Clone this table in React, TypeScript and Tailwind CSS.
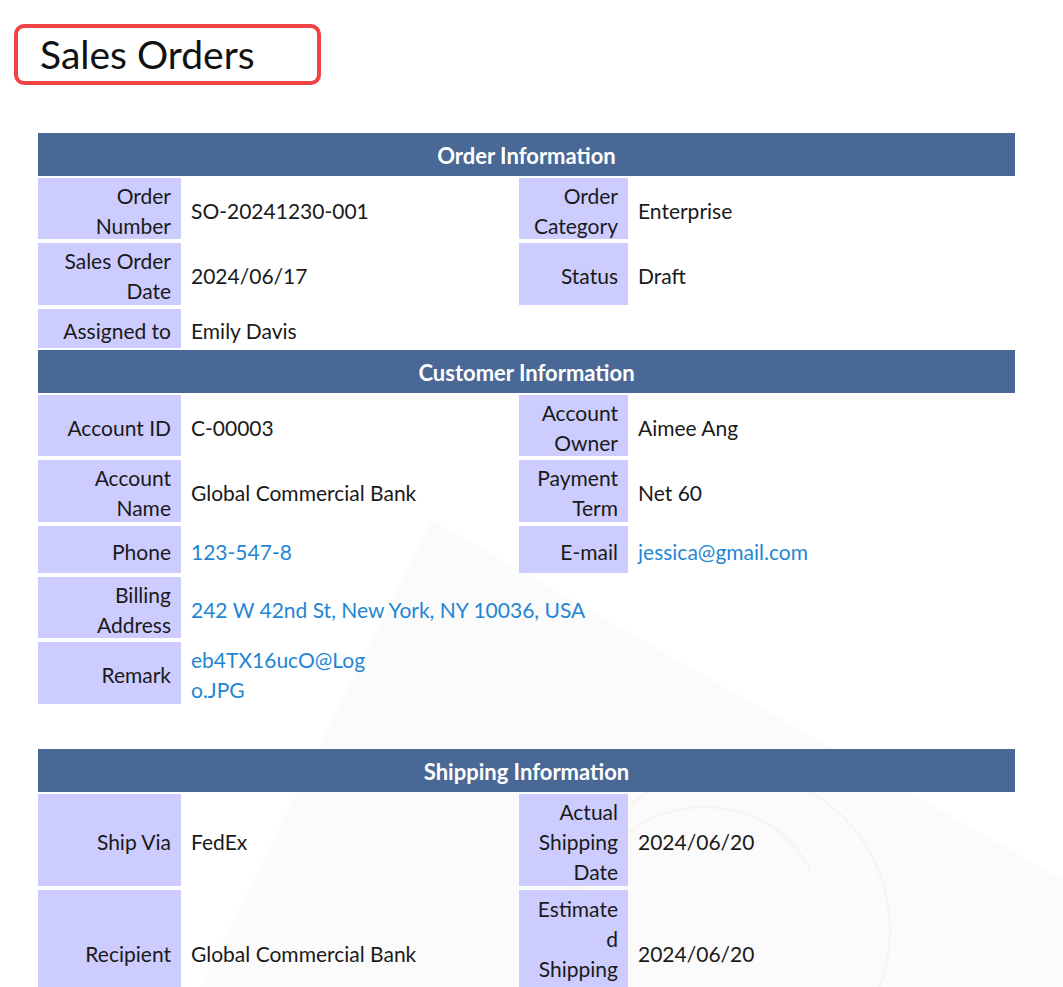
type Field = {
  label?: React.ReactNode;
  value?: React.ReactNode;
  link?: boolean;
};

type RowProps = {
  h: string;
  left: Field;
  right?: Field;
  wide?: boolean;
};

const Label = ({ children }: { children?: React.ReactNode }) => (
  <div className="h-full bg-[#ccccff] flex items-center justify-end text-right pr-[10px] leading-[30px]">
    <div className="translate-y-[2px]">{children}</div>
  </div>
);

const Value = ({ children, link, wide }: { children?: React.ReactNode; link?: boolean; wide?: boolean }) => (
  <div
    className={`h-full flex items-center pl-[10px] leading-[30px] ${link ? 'text-[#1f86d4]' : 'text-[#1a1a1a]'} ${wide ? 'col-span-3' : ''}`}
  >
    <div className="translate-y-[2px]">{children}</div>
  </div>
);

const Row = ({ h, left, right, wide }: RowProps) => (
  <div className={`grid grid-cols-[143px_338px_109px_1fr] py-[2px] ${h}`}>
    <Label>{left.label}</Label>
    <Value link={left.link} wide={wide}>
      {left.value}
    </Value>
    {!wide && right && <Label>{right.label}</Label>}
    {!wide && right && <Value link={right.link}>{right.value}</Value>}
  </div>
);

const SectionHeader = ({ title }: { title: string }) => (
  <div className="h-[43px] bg-[#4a6896] text-white font-bold text-[22px] flex items-center justify-center">
    <span className="translate-y-[1px]">{title}</span>
  </div>
);

// faint watermark behind the page
const Watermark = () => (
  <svg className="absolute inset-0 pointer-events-none" width="1063" height="987" viewBox="0 0 1063 987">
    <polygon points="432,520 1063,880 1063,987 200,987" fill="#fbfbfb" />
    <circle cx="730" cy="930" r="160" fill="none" stroke="#f6f4f0" strokeWidth="2" />
    <path d="M610 850 C 660 790, 770 790, 810 870" fill="none" stroke="#f6f4f0" strokeWidth="2" />
  </svg>
);

export default function App() {
  return (
    <div className="relative w-[1063px] h-[987px] overflow-hidden bg-white font-['Lato',sans-serif] text-[21px] text-[#1a1a1a]">
      <Watermark />
      <div className="relative">
        <div className="ml-[14px] mt-[24px] w-[307px] h-[61px] border-4 border-[#f04444] rounded-[10px] flex items-center pl-[22px]">
          <span className="text-[39px] leading-none text-[#111]">Sales Orders</span>
        </div>

        <div className="ml-[38px] w-[977px] mt-[48px]">
          <SectionHeader title="Order Information" />
          <Row
            h="h-[65px]"
            left={{ label: <>Order<br />Number</>, value: 'SO-20241230-001' }}
            right={{ label: <>Order<br />Category</>, value: 'Enterprise' }}
          />
          <Row
            h="h-[66px]"
            left={{ label: <>Sales Order<br />Date</>, value: '2024/06/17' }}
            right={{ label: 'Status', value: 'Draft' }}
          />
          <Row h="h-[43px]" left={{ label: 'Assigned to', value: 'Emily Davis' }} />

          <SectionHeader title="Customer Information" />
          <Row
            h="h-[65px]"
            left={{ label: 'Account ID', value: 'C-00003' }}
            right={{ label: <>Account<br />Owner</>, value: 'Aimee Ang' }}
          />
          <Row
            h="h-[66px]"
            left={{ label: <>Account<br />Name</>, value: 'Global Commercial Bank' }}
            right={{ label: <>Payment<br />Term</>, value: 'Net 60' }}
          />
          <Row
            h="h-[51px]"
            left={{ label: 'Phone', value: '123-547-8', link: true }}
            right={{ label: 'E-mail', value: 'jessica@gmail.com', link: true }}
          />
          <Row
            h="h-[65px]"
            wide
            left={{ label: <>Billing<br />Address</>, value: '242 W 42nd St, New York, NY 10036, USA', link: true }}
          />
          <Row
            h="h-[66px]"
            left={{ label: 'Remark', value: <>eb4TX16ucO@Log<br />o.JPG</>, link: true }}
          />

          <div className="mt-[43px]">
            <SectionHeader title="Shipping Information" />
            <Row
              h="h-[96px]"
              left={{ label: 'Ship Via', value: 'FedEx' }}
              right={{ label: <>Actual<br />Shipping<br />Date</>, value: '2024/06/20' }}
            />
            <Row
              h="h-[128px]"
              left={{ label: 'Recipient', value: 'Global Commercial Bank' }}
              right={{ label: <>Estimate<br />d<br />Shipping<br />Date</>, value: '2024/06/20' }}
            />
          </div>
        </div>
      </div>
    </div>
  );
}
